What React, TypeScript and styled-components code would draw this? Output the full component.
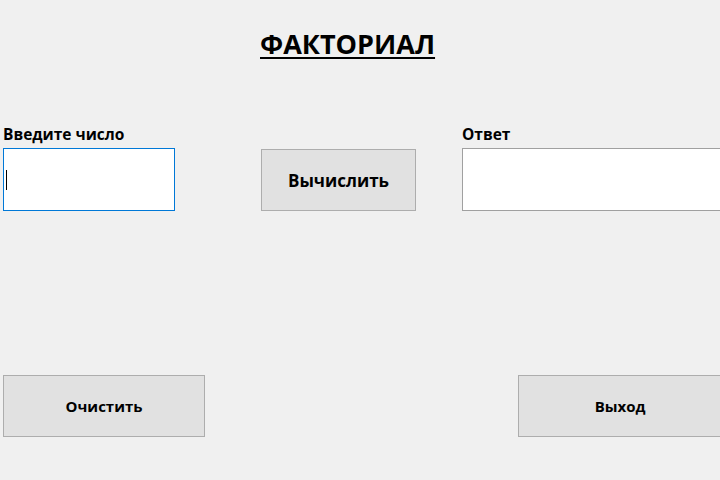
import React from "react";
import styled, {createGlobalStyle} from "styled-components";

const Global = createGlobalStyle`
    html, body {
        margin: 0;
        background: #f0f0f0;
        overflow: hidden;
    }
    body {
        font-family: "Open Sans", "Noto Sans", sans-serif;
        color: #000;
    }
`;

const Form = styled.div`
    width: 720px;
    height: 480px;
    display: flex;
    flex-direction: column;
    padding-left: 3px;
    box-sizing: border-box;
    overflow: hidden;
`;

const Title = styled.h1`
    margin: 25px 0 0 257px;
    font-size: 27px;
    font-weight: 700;
    line-height: 38px;
    text-decoration: underline;
    text-underline-offset: 3px;
    text-decoration-thickness: 2px;
`;

const MiddleRow = styled.div`
    display: flex;
    align-items: flex-end;
    margin-top: 61px;
`;

const Field = styled.div<{$offset?: number; $width: number}>`
    display: flex;
    flex-direction: column;
    gap: 4px;
    margin-left: ${p => p.$offset ?? 0}px;
    width: ${p => p.$width}px;
    flex-shrink: 0;
`;

const Label = styled.label`
    font-size: 15.5px;
    font-weight: 700;
    line-height: 20px;
`;

const Box = styled.div<{$focused?: boolean}>`
    height: 63px;
    box-sizing: border-box;
    background: #fff;
    border: 1px solid ${p => p.$focused ? "#0078d7" : "#a0a0a0"};
    display: flex;
    align-items: center;
    padding-left: 2px;
`;

const Caret = styled.span`
    width: 1px;
    height: 20px;
    background: #000;
`;

const Button = styled.button<{$offset?: number; $width: number; $size: number}>`
    margin-left: ${p => p.$offset ?? 0}px;
    width: ${p => p.$width}px;
    height: 62px;
    flex-shrink: 0;
    background: #e1e1e1;
    border: 1px solid #adadad;
    font-family: "Open Sans", "Noto Sans", sans-serif;
    font-weight: 700;
    font-size: ${p => p.$size}px;
    color: #000;
    padding: 0;
`;

const BottomRow = styled.div`
    display: flex;
    margin-top: 164px;
`;

export default function App() {
    return (
        <>
            <Global/>
            <Form>
                <Title>ФАКТОРИАЛ</Title>
                <MiddleRow>
                    <Field $width={172}>
                        <Label>Введите число</Label>
                        <Box $focused><Caret/></Box>
                    </Field>
                    <Button $offset={86} $width={155} $size={17}>Вычислить</Button>
                    <Field $offset={46} $width={262}>
                        <Label>Ответ</Label>
                        <Box/>
                    </Field>
                </MiddleRow>
                <BottomRow>
                    <Button $width={202} $size={15}>Очистить</Button>
                    <Button $offset={313} $width={204} $size={15}>Выход</Button>
                </BottomRow>
            </Form>
        </>
    );
}
